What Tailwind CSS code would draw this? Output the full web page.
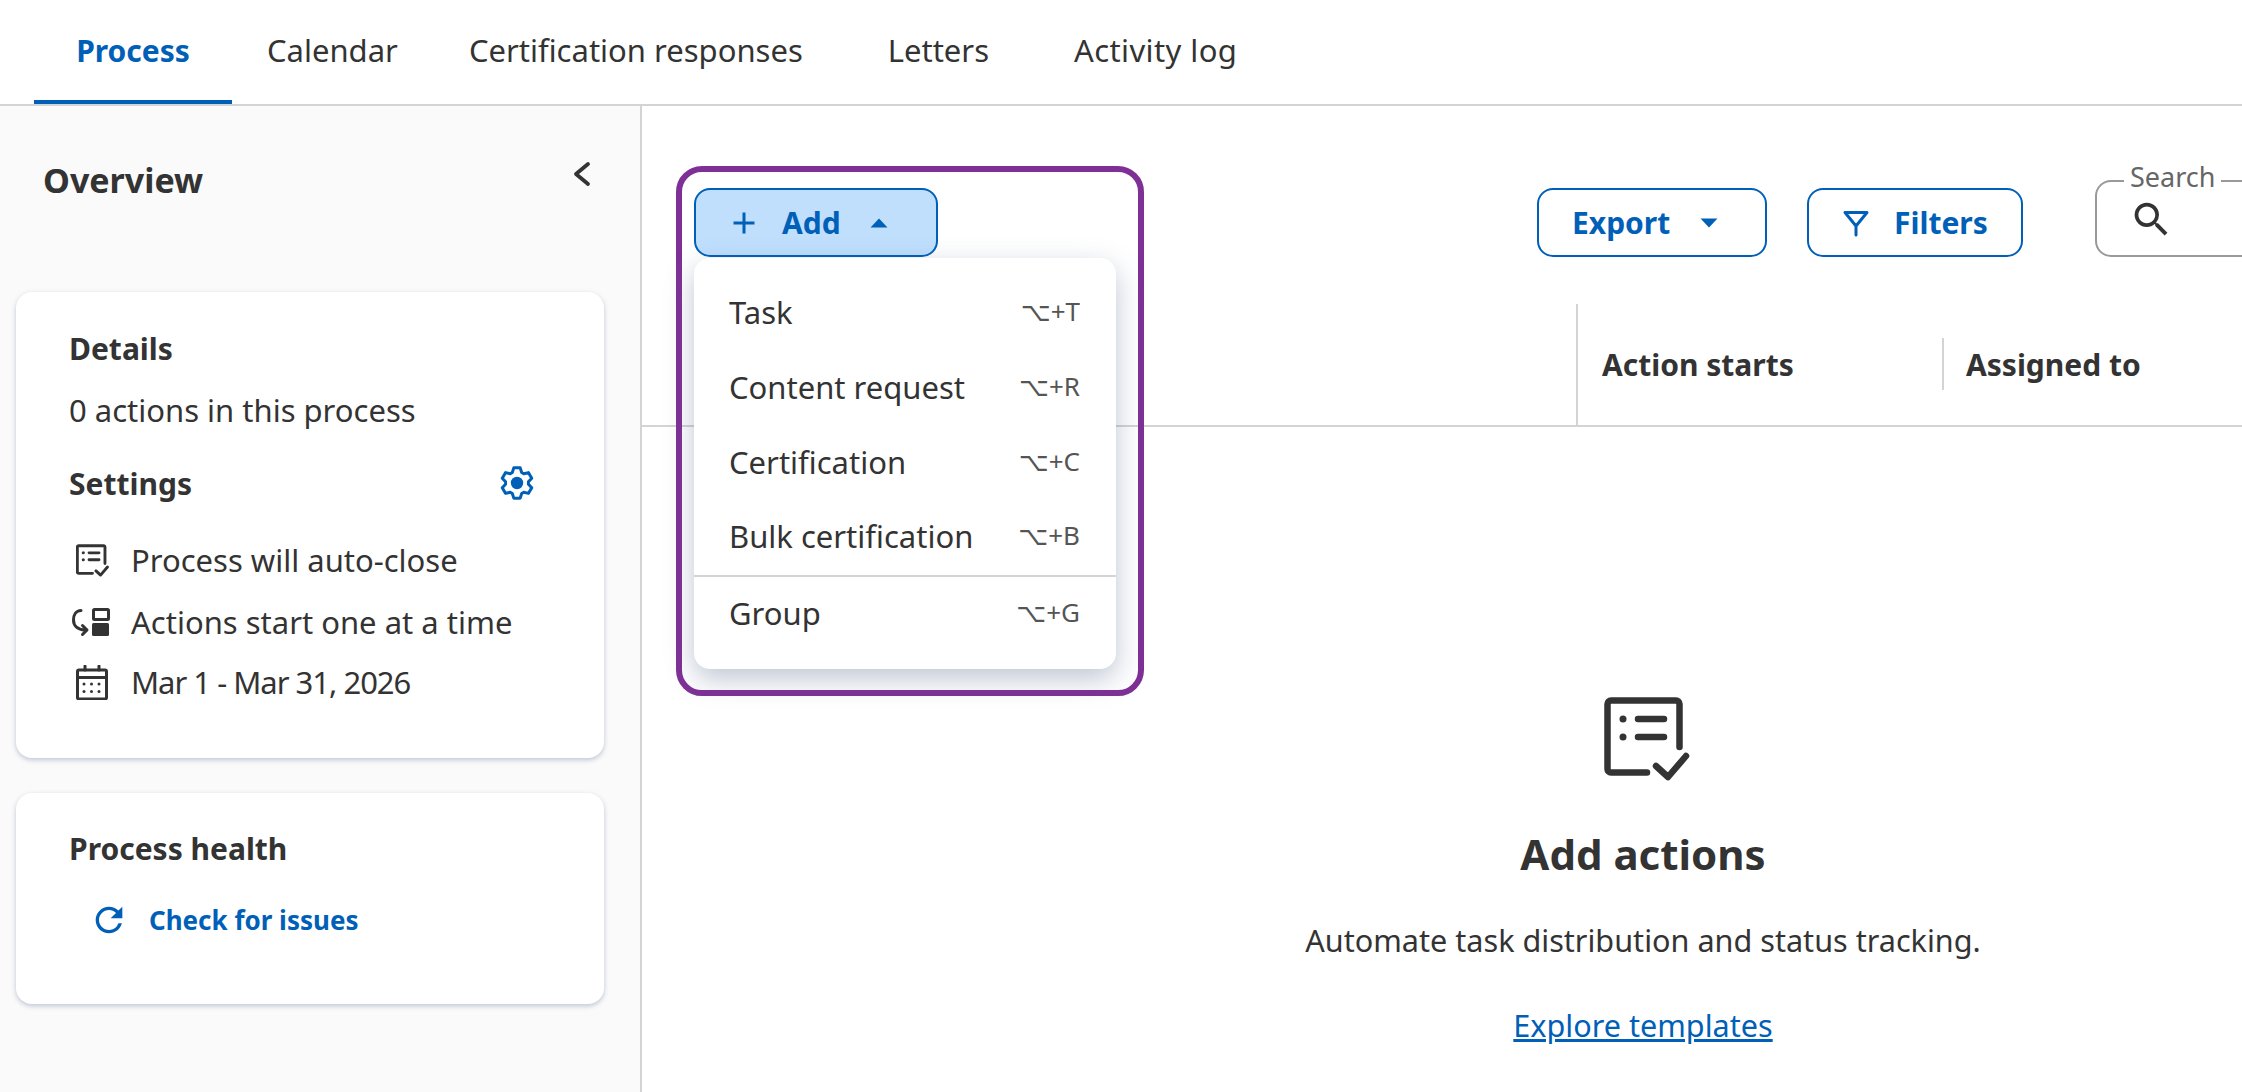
<!doctype html>
<html lang="en">
<head>
<meta charset="UTF-8" />
<title>Process</title>
<script src="https://cdn.jsdelivr.net/npm/@tailwindcss/browser@4"></script>
</head>
<body class="bg-white">
<div class="w-[2242px] h-[1092px] overflow-hidden font-['Noto_Sans','Roboto',sans-serif] text-[#333] text-[31px]">

  <!-- tabs -->
  <header class="h-[106px] border-b-2 border-[#d4d4d4] flex pl-[34px]">
    <a class="w-[198px] h-[104px] border-b-4 border-[#0060b8] flex items-center justify-center font-bold text-[30px] text-[#0060b8]">Process</a>
    <a class="ml-[35px] flex items-center pb-1">Calendar</a>
    <a class="ml-[71px] flex items-center pb-1">Certification responses</a>
    <a class="ml-[85px] flex items-center pb-1">Letters</a>
    <a class="ml-[85px] flex items-center pb-1 tracking-[.4px]">Activity log</a>
  </header>

  <div class="flex h-[986px]">
    <!-- overview -->
    <aside class="w-[642px] shrink-0 bg-[#fafafa] border-r-2 border-[#d4d4d4] pl-4 pr-[36px]">
      <div class="h-[186px] flex items-start justify-between pl-[27px] pr-[13px]">
        <h2 class="mt-[52px] text-[34px] leading-[44px] font-bold">Overview</h2>
        <svg class="mt-[55px]" width="18" height="26" viewBox="0 0 18 26" fill="none" stroke="#333" stroke-width="3.8" stroke-linecap="round" stroke-linejoin="round"><path d="M15 3 3 13l12 10"/></svg>
      </div>
      <section class="h-[466px] bg-white rounded-[16px] shadow-[0_2px_5px_rgba(80,100,140,.35)] pl-[53px] pr-[70px] pt-[38px]">
        <h3 class="font-bold text-[30px] leading-[38px]">Details</h3>
        <p class="mt-[22px] leading-[40px]">0 actions in this process</p>
        <div class="mt-[33px] flex items-center justify-between h-[40px]">
          <h3 class="font-bold text-[30px]">Settings</h3>
          <svg width="34" height="36" viewBox="-17 -17.5 34 35" fill="none" stroke="#0060b8" stroke-width="3" stroke-linejoin="round"><path d="M-4.68-10.5-3.22-15.16 3.22-15.16 4.68-10.5 6.76-9.3 11.52-10.37 14.74-4.79 11.44-1.2 11.44 1.2 14.74 4.79 11.52 10.37 6.76 9.3 4.68 10.5 3.22 15.16-3.22 15.16-4.68 10.5-6.76 9.3-11.52 10.37-14.74 4.79-11.44 1.2-11.44-1.2-14.74-4.79-11.52-10.37-6.76-9.3Z"/><circle r="6.2" fill="#0060b8" stroke="none"/></svg>
        </div>
        <ul class="mt-[37px]">
          <li class="flex items-center h-[40px]">
            <svg class="ml-[7px] mr-[22px] shrink-0" width="33" height="33" viewBox="0 0 86 84" fill="none" stroke="#333" stroke-width="7.5" stroke-linecap="round" stroke-linejoin="round"><path d="M43 75.500H7A3.500 3.500 0 0 1 3.500 72V7A3.500 3.500 0 0 1 7 3.500h65A3.500 3.500 0 0 1 75.500 7v43"/><path d="M34 22h26M34 40h26M52 69l12 11 18-21"/><circle cx="19" cy="22" r="4" fill="#333" stroke="none"/><circle cx="19" cy="40" r="4" fill="#333" stroke="none"/></svg>
            Process will auto-close
          </li>
          <li class="flex items-center h-[40px] mt-[22px]">
            <svg class="ml-[3px] mr-[21px] shrink-0" width="38" height="29" viewBox="0 0 38 29" fill="none" stroke="#333" stroke-width="3" stroke-linecap="round" stroke-linejoin="round"><path d="M9 2.500C4 2.500 1.500 7 1.500 12c0 6 4.500 10 12.500 10"/><path d="m10.500 17.500 4.500 4.500-4.500 4.500"/><rect x="21.500" y="1.500" width="15" height="10" rx="1"/><rect x="20" y="15" width="17" height="13" rx="1.500" fill="#333" stroke="none"/></svg>
            Actions start one at a time
          </li>
          <li class="flex items-center h-[40px] mt-[20px] tracking-[-1px]">
            <svg class="ml-[7px] mr-[23px] shrink-0" width="32" height="35" viewBox="0 0 32 35" fill="none" stroke="#333" stroke-width="3" stroke-linecap="round" stroke-linejoin="round"><rect x="1.500" y="5" width="29" height="29" rx="1.500"/><path d="M1.500 12.500h29M9 1v4M23 1v4"/><g fill="#333" stroke="none"><circle cx="8" cy="19" r="1.500"/><circle cx="15.500" cy="19" r="1.500"/><circle cx="23" cy="19" r="1.500"/><circle cx="8" cy="26.500" r="1.500"/><circle cx="15.500" cy="26.500" r="1.500"/><circle cx="23" cy="26.500" r="1.500"/></g></svg>
            Mar 1 - Mar 31, 2026
          </li>
        </ul>
      </section>
      <section class="mt-[35px] h-[211px] bg-white rounded-[16px] shadow-[0_2px_5px_rgba(80,100,140,.35)] pl-[53px] pt-[36px]">
        <h3 class="font-bold text-[30px] leading-[40px]">Process health</h3>
        <a class="mt-[31px] ml-[20px] flex items-center text-[#0060b8] font-bold text-[26px] leading-[40px]">
          <svg class="mr-[20px]" width="40" height="40" viewBox="0 0 24 24" fill="#0060b8"><path d="M17.650 6.350A7.958 7.958 0 0 0 12 4c-4.420 0-7.990 3.580-7.990 8s3.570 8 7.990 8c3.730 0 6.840-2.550 7.730-6h-2.080A5.990 5.990 0 0 1 12 18c-3.310 0-6-2.690-6-6s2.690-6 6-6c1.660 0 3.140.69 4.220 1.780L13 11h7V4l-2.350 2.350z"/></svg>
          Check for issues
        </a>
      </section>
    </aside>

    <!-- process table -->
    <main class="relative flex-1 overflow-hidden">
      <div class="w-[2002px]">
        <div class="flex pt-[82px] pl-[52px] text-[30px]">
          <button class="w-[244px] h-[69px] rounded-[16px] border-2 border-[#0060b8] bg-[#bfdffd] flex items-center pl-[36px] text-[#0060b8] font-bold">
            <svg width="24" height="24" viewBox="0 0 24 24" fill="none" stroke="#0060b8" stroke-width="3"><path d="M12 1.500v21M1.500 12h21"/></svg>
            <span class="ml-[26px]">Add</span>
            <svg class="ml-[29px]" width="18" height="10" viewBox="0 0 18 10" fill="#0060b8"><path d="M9 .5 17.500 9.500H.5Z"/></svg>
          </button>
          <button class="ml-[599px] w-[230px] h-[69px] rounded-[16px] border-2 border-[#0060b8] flex items-center pl-[33px] text-[#0060b8] font-bold">
            Export
            <svg class="ml-[30px]" width="18" height="10" viewBox="0 0 18 10" fill="#0060b8"><path d="M9 9.500 17.500.5H.5Z"/></svg>
          </button>
          <button class="ml-[40px] w-[216px] h-[69px] rounded-[16px] border-2 border-[#0060b8] flex items-center pl-[33px] text-[#0060b8] font-bold">
            <svg width="28" height="28" viewBox="0 0 28 28" fill="none" stroke="#0060b8" stroke-width="3" stroke-linejoin="round" stroke-linecap="round"><path d="M3 3.500h22L14 17 3 3.500ZM14 16v10"/></svg>
            <span class="ml-[24px]">Filters</span>
          </button>
          <div class="relative ml-[72px] -mt-[8px] w-[420px] h-[77px] rounded-[16px] border-2 border-[#999] flex items-center pl-[32px]">
            <span class="absolute left-[27px] -top-[22px] bg-white px-[6px] text-[27px] leading-[34px] text-[#666]">Search</span>
            <svg class="mt-[1px]" width="45" height="45" viewBox="0 0 24 24" fill="#333"><path d="M15.500 14h-.79l-.28-.27A6.471 6.471 0 0 0 16 9.500 6.500 6.500 0 1 0 9.500 16c1.610 0 3.090-.59 4.230-1.570l.27.28v.79l5 4.990L20.490 19l-4.990-5zm-6 0C7.010 14 5 11.990 5 9.500S7.010 5 9.500 5 14 7.010 14 9.500 11.990 14 9.500 14z"/></svg>
          </div>
        </div>

        <div class="mt-[47px] h-[123px] border-b-2 border-[#d4d4d4] flex font-bold text-[30px]">
          <div class="w-[936px] border-r-2 border-[#d4d4d4]"></div>
          <div class="w-[364px] flex items-center pl-[24px]">Action starts</div>
          <div class="flex items-center pl-[24px] relative before:absolute before:left-0 before:top-[34px] before:h-[52px] before:w-[2px] before:bg-[#d4d4d4]">Assigned to</div>
        </div>

        <div class="flex flex-col items-center pt-[270px]">
          <svg class="ml-[8px]" width="86" height="84" viewBox="0 0 86 84" fill="none" stroke="#333" stroke-width="6.5" stroke-linecap="round" stroke-linejoin="round"><path d="M43 75.500H7A3.500 3.500 0 0 1 3.500 72V7A3.500 3.500 0 0 1 7 3.500h65A3.500 3.500 0 0 1 75.500 7v43"/><path d="M34 22h26M34 40h26M52 69l12 11 18-21"/><circle cx="19" cy="22" r="3.500" fill="#333" stroke="none"/><circle cx="19" cy="40" r="3.500" fill="#333" stroke="none"/></svg>
          <h2 class="mt-[45px] text-[42px] leading-[56px] font-bold">Add actions</h2>
          <p class="mt-[36px] text-[30.6px] leading-[44px]">Automate task distribution and status tracking.</p>
          <a class="mt-[41px] text-[30.6px] leading-[44px] text-[#0060b8] underline">Explore templates</a>
        </div>
      </div>

      <!-- highlight and open menu -->
      <div class="absolute left-[34px] top-[60px] w-[468px] h-[530px] rounded-[26px] border-[6px] border-[#7f3096]"></div>
      <div class="absolute left-[52px] top-[152px] w-[422px] h-[411px] rounded-[16px] bg-white shadow-[0_10px_28px_rgba(70,90,130,.35)] pt-[24px]">
        <div class="flex justify-between items-center h-[60px] pl-[35px] pr-[36px]"><span>Task</span><span class="text-[26px] text-[#555]"><span class="font-['DejaVu_Sans'] text-[26px]">⌥</span>+T</span></div>
        <div class="flex justify-between items-center h-[60px] mt-[15px] pl-[35px] pr-[36px]"><span>Content request</span><span class="text-[26px] text-[#555]"><span class="font-['DejaVu_Sans'] text-[26px]">⌥</span>+R</span></div>
        <div class="flex justify-between items-center h-[60px] mt-[15px] pl-[35px] pr-[36px]"><span>Certification</span><span class="text-[26px] text-[#555]"><span class="font-['DejaVu_Sans'] text-[26px]">⌥</span>+C</span></div>
        <div class="flex justify-between items-center h-[60px] mt-[14px] pl-[35px] pr-[36px]"><span>Bulk certification</span><span class="text-[26px] text-[#555]"><span class="font-['DejaVu_Sans'] text-[26px]">⌥</span>+B</span></div>
        <div class="h-[2px] mt-[9px] bg-[#d4d4d4]"></div>
        <div class="flex justify-between items-center h-[60px] mt-[6px] pl-[35px] pr-[36px]"><span>Group</span><span class="text-[26px] text-[#555]"><span class="font-['DejaVu_Sans'] text-[26px]">⌥</span>+G</span></div>
      </div>
    </main>
  </div>
</div>
</body>
</html>
